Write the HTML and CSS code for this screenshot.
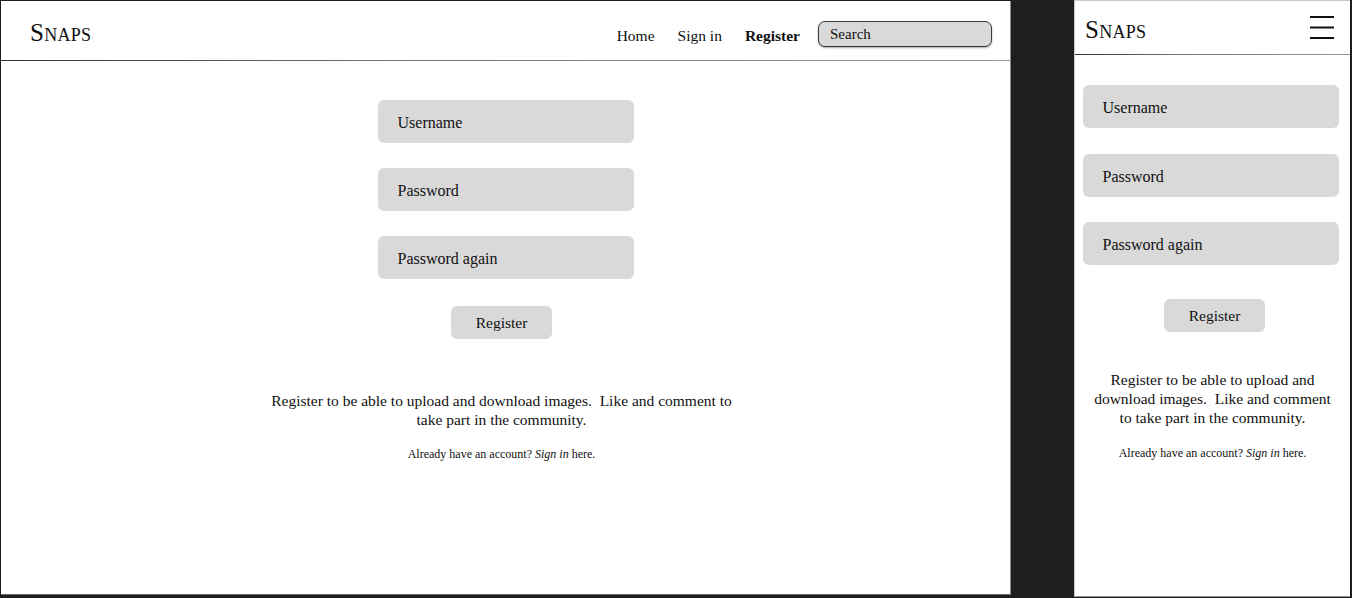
FILE: index.html
```html
<!DOCTYPE html>
<html lang="en">
<head>
<meta charset="utf-8">
<title>Snaps - Register</title>
<link rel="stylesheet" href="styles.css">
</head>
<body>
  <div class="frame desktop">
    <header class="topbar">
      <div class="logo">Snaps</div>
      <nav class="nav">
        <a class="nav-link">Home</a>
        <a class="nav-link">Sign in</a>
        <a class="nav-link active">Register</a>
        <div class="search">Search</div>
      </nav>
    </header>
    <main class="content">
      <div class="field">Username</div>
      <div class="field">Password</div>
      <div class="field">Password again</div>
      <div class="btn">Register</div>
      <p class="info">Register to be able to upload and download images.&nbsp; Like and comment to take part in the community.</p>
      <p class="small">Already have an account? <em>Sign in</em> here.</p>
    </main>
  </div>
  <div class="frame mobile">
    <header class="topbar m-topbar">
      <div class="logo">Snaps</div>
      <svg class="burger" width="26" height="26" viewBox="0 0 26 26">
        <line x1="1" y1="3" x2="25" y2="3" stroke="#111" stroke-width="2"/>
        <line x1="1" y1="13.5" x2="25" y2="13.5" stroke="#111" stroke-width="2"/>
        <line x1="1" y1="24" x2="25" y2="24" stroke="#111" stroke-width="2"/>
      </svg>
    </header>
    <main class="content m-content">
      <div class="field">Username</div>
      <div class="field">Password</div>
      <div class="field">Password again</div>
      <div class="btn">Register</div>
      <p class="info">Register to be able to upload and download images.&nbsp; Like and comment to take part in the community.</p>
      <p class="small">Already have an account? <em>Sign in</em> here.</p>
    </main>
  </div>
</body>
</html>
```
FILE: styles.css
```css
* { box-sizing: border-box; }
html, body { margin: 0; padding: 0; }
body {
  background: #1e1e1e;
  height: 598px;
  overflow: hidden;
  display: flex;
  align-items: flex-start;
  font-family: "Liberation Serif", "Times New Roman", serif;
  color: #111;
}
.frame { background: #fff; }
.desktop {
  margin: 1px 0 0 1px;
  width: 1010px;
  height: 594px;
  border-right: 1px solid #8a8a8a;
  border-bottom: 1px solid #6a6a6a;
}
.mobile {
  margin-left: 63px;
  width: 276px;
  height: 597px;
  border-left: 1px solid #c8c8c8;
  border-top: 1px solid #c8c8c8;
  border-bottom: 1px solid #909090;
}
.topbar {
  height: 60px;
  display: flex;
  align-items: center;
  justify-content: space-between;
  padding: 0 18px 0 29px;
  border-bottom: 1px solid transparent;
  border-image: linear-gradient(90deg, #333 0%, #777 40%, #999 100%) 1;
}
.logo {
  font-variant: small-caps;
  font-size: 25px;
  letter-spacing: 0.3px;
  margin-top: 5px;
}
.nav {
  display: flex;
  align-items: center;
  font-size: 15.5px;
  margin-top: 7px;
}
.nav-link { margin-right: 23px; margin-top: 4px; }
.nav-link.active { font-weight: bold; margin-right: 18px; }
.search {
  width: 174px;
  height: 26px;
  background: #d9d9d9;
  border: 1px solid #3a3a3a;
  border-radius: 7px;
  box-shadow: 0 1px 2px rgba(0,0,0,0.35);
  padding: 4px 0 0 11px;
  font-size: 15px;
}
.content {
  display: flex;
  flex-direction: column;
  align-items: center;
  padding-top: 39px;
  padding-right: 8px;
}
.field {
  width: 256px;
  height: 43px;
  background: #d9d9d9;
  border-radius: 6px;
  margin-bottom: 25px;
  padding: 14px 0 0 20px;
  font-size: 16px;
  margin-left: 8px;
}
.btn {
  width: 101px;
  height: 33px;
  background: #d9d9d9;
  border-radius: 6px;
  text-align: center;
  padding-top: 8px;
  font-size: 15.5px;
  margin-top: 2px;
}
.info {
  margin: 52px 0 0;
  width: 470px;
  text-align: center;
  font-size: 15.5px;
  line-height: 19px;
}
.small {
  margin: 18px 0 0;
  font-size: 12px;
  text-align: center;
}
.m-topbar {
  height: 54px;
  padding: 0 15px 0 10px;
}
.m-topbar .logo { margin-top: 4px; }
.burger { margin-top: -1px; }
.m-content { padding-top: 30px; padding-right: 0; }
.m-content .field { margin-left: 0; margin-right: 4px; margin-bottom: 25.5px; }
.m-content .btn { margin-top: 8px; margin-left: 4px; }
.m-content .info { width: 250px; margin-top: 38px; }
.m-content .small { margin-top: 19px; }
```
